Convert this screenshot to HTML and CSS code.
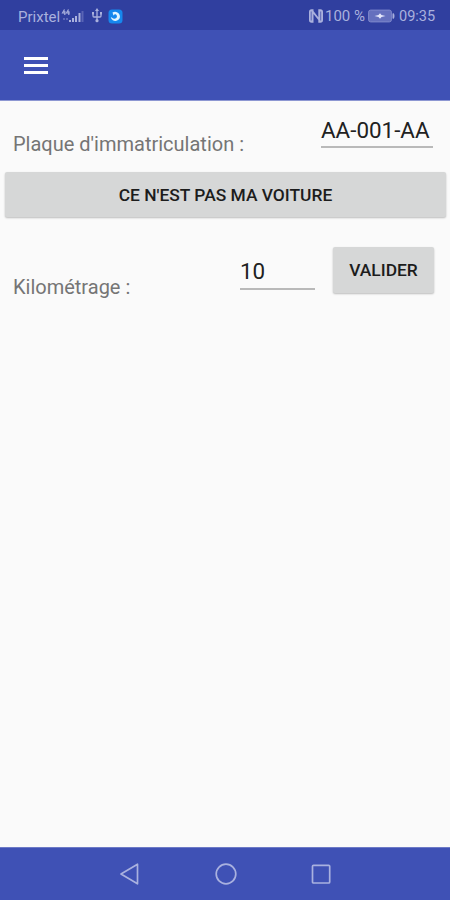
FILE: index.html
```html
<!DOCTYPE html>
<html lang="fr">
<head>
<meta charset="utf-8">
<title>Voiture</title>
<link rel="stylesheet" href="styles.css">
</head>
<body>
<div class="screen">
  <header class="status">
    <span class="carrier">Prixtel</span>
    <svg class="signal" width="24" height="18" viewBox="0 0 24 18">
      <path d="M3.500 2.500L1.500 6H4.500M3.800 4V8M7.500 2.500L5.500 6H8.800M7.800 4V8" fill="none" stroke="#aab1dd" stroke-width="1.200"/>
      <path d="M2 11h2v2H2zM5 11h2v2H5z" fill="#5d68b8"/>
      <path d="M8 13h2v2H8zM11 11h2v4h-2zM14 9h2v6h-2zM17.500 6h2v9h-2z" fill="#aab1dd"/>
      <path d="M20.500 4h2v11h-2z" fill="#5964b5"/>
    </svg>
    <svg class="usb" width="12" height="18" viewBox="0 0 12 18">
      <path d="M6 3V14M2 6V9Q2 10 3 10H9Q10 10 10 9V6" fill="none" stroke="#aab1dd" stroke-width="1.300"/>
      <path d="M6 1L8 4H4zM1 5h2v2.500H1zM9 5h2v2.500H9z" fill="#aab1dd"/>
      <circle cx="6" cy="13.700" r="1.600" fill="#aab1dd"/>
    </svg>
    <svg class="app" width="15" height="15" viewBox="0 0 15 15">
      <rect x=".5" y=".5" width="14" height="14" rx="3.500" fill="#1688ee"/>
      <path d="M4.500 3.500Q8 1.800 10.800 4.500Q13 7.500 11 10.300Q8 13 4.800 11.200Q3 10 2.800 8L5.300 9.500Q8 10.200 9 8Q9.300 5.500 7 5L5.500 6.500Z" fill="#e2f5ff"/>
    </svg>
    <span class="spacer"></span>
    <svg class="nfc" width="16" height="16" viewBox="0 0 16 16">
      <path d="M5.500 1.300H3.500Q1 1.300 1 4V12Q1 14.700 3.500 14.700H5.500V6L10.300 12V14.700H12.500Q15 14.700 15 12V4Q15 1.300 12.500 1.300H10.300V9.300L5.500 3Z" fill="#aab1dd"/>
      <path d="M3.200 3.500V12.500M12.700 3.500V12.500" fill="none" stroke="#4451a9" stroke-width=".8"/>
    </svg>
    <span class="percent">100 %</span>
    <svg class="battery" width="27" height="14" viewBox="0 0 27 14">
      <rect x=".6" y="1.100" width="22.800" height="11.800" rx="2" fill="#6570be" stroke="#7d87cb"/>
      <path d="M25 4.500Q26 4.500 26 7T25 9.500z" fill="#aab1dd" stroke="#aab1dd"/>
      <path d="M6.500 7L10.500 6L12 4.200L13.500 6L17.500 7L13.500 8L12 9.800L10.500 8z" fill="#e3e6fa"/>
    </svg>
    <span class="clock">09:35</span>
  </header>
  <nav class="toolbar">
    <svg width="24" height="18" viewBox="0 0 24 18"><path d="M0 0H24V3H0zM0 7H24V10H0zM0 14H24V17H0z" fill="#fff"/></svg>
  </nav>
  <main class="content">
    <div class="row plate">
      <span class="label plate-label">Plaque d'immatriculation :</span>
      <div class="field plate-field">AA-001-AA</div>
    </div>
    <button class="btn wide"><span>CE N'EST PAS MA VOITURE</span></button>
    <div class="row mileage">
      <span class="label mileage-label">Kilométrage :</span>
      <div class="field mileage-field">10</div>
      <button class="btn submit"><span>VALIDER</span></button>
    </div>
  </main>
  <footer class="navbar">
    <svg width="22" height="24" viewBox="0 0 22 24"><path d="M2 12L18.500 2.200V21.800Z" fill="none" stroke="#a9b1df" stroke-width="1.700" stroke-linejoin="round"/></svg>
    <svg width="24" height="24" viewBox="0 0 24 24"><circle cx="12" cy="12" r="9.800" fill="none" stroke="#a9b1df" stroke-width="1.700"/></svg>
    <svg width="22" height="24" viewBox="0 0 22 24"><rect x="2.500" y="3.300" width="17.200" height="17.700" rx="1" fill="none" stroke="#a9b1df" stroke-width="1.700"/></svg>
  </footer>
</div>
</body>
</html>
```
FILE: styles.css
```css
* { box-sizing: border-box; }
body { margin: 0; font-family: Roboto, sans-serif; background: #fafafa; }
svg { display: block; flex: none; }
.screen { display: flex; flex-direction: column; width: 450px; height: 900px; overflow: hidden; }
.status {
  display: flex; align-items: center; height: 30px; padding: 2px 14px 0 18px;
  background: #303f9f; color: #aab1dd; font-size: 15px; line-height: 20px; white-space: nowrap;
}
.carrier { width: 43px; padding-top: 1px; font-size: 15px; }
.usb { margin-left: 6px; }
.app { margin-left: 5px; }
.spacer { flex: 1; }
.percent { width: 43px; margin-left: 1px; }
.battery { margin-right: 4px; }
.clock { width: 37px; padding-top: 1px; font-size: 14.5px; }
.toolbar { display: flex; height: 70px; padding: 27px 0 0 23.5px; background: #3f51b5; }
.content { flex: 1; border-top: 1px solid #8d97d2; }
.row { display: flex; }
.label { color: #757575; font-size: 20px; line-height: 24px; white-space: nowrap; }
.field {
  border-bottom: 2px solid #b9b9b9; color: #212121; font-size: 22.4px; line-height: 30px; white-space: nowrap;
}
.plate { height: 71px; padding: 0 17px 0 13px; justify-content: space-between; }
.plate-label { margin-top: 31px; }
.plate-field { width: 112px; height: 33px; margin-top: 14px; }
.btn {
  display: flex; align-items: center; justify-content: center; padding: 0; border: 0; border-radius: 2px;
  background: #d6d7d7; color: #1c1c1c; font: 500 17.4px/24px Roboto, sans-serif; white-space: nowrap;
  box-shadow: 0 1px 2px rgba(0, 0, 0, .25);
}
.wide { width: 441px; height: 45px; margin-left: 5px; }
.mileage { margin-top: 30px; padding: 0 16px 0 13px; }
.mileage-label { width: 227px; margin-top: 28px; }
.mileage-field { width: 75px; height: 34px; margin-top: 9px; }
.submit { width: 101px; height: 46px; margin-left: auto; }
.navbar {
  display: flex; justify-content: space-between; height: 53px; padding: 14px 118px 0 119px;
  background: #3f51b5; border-top: 1px solid #6d7ac6;
}
```
